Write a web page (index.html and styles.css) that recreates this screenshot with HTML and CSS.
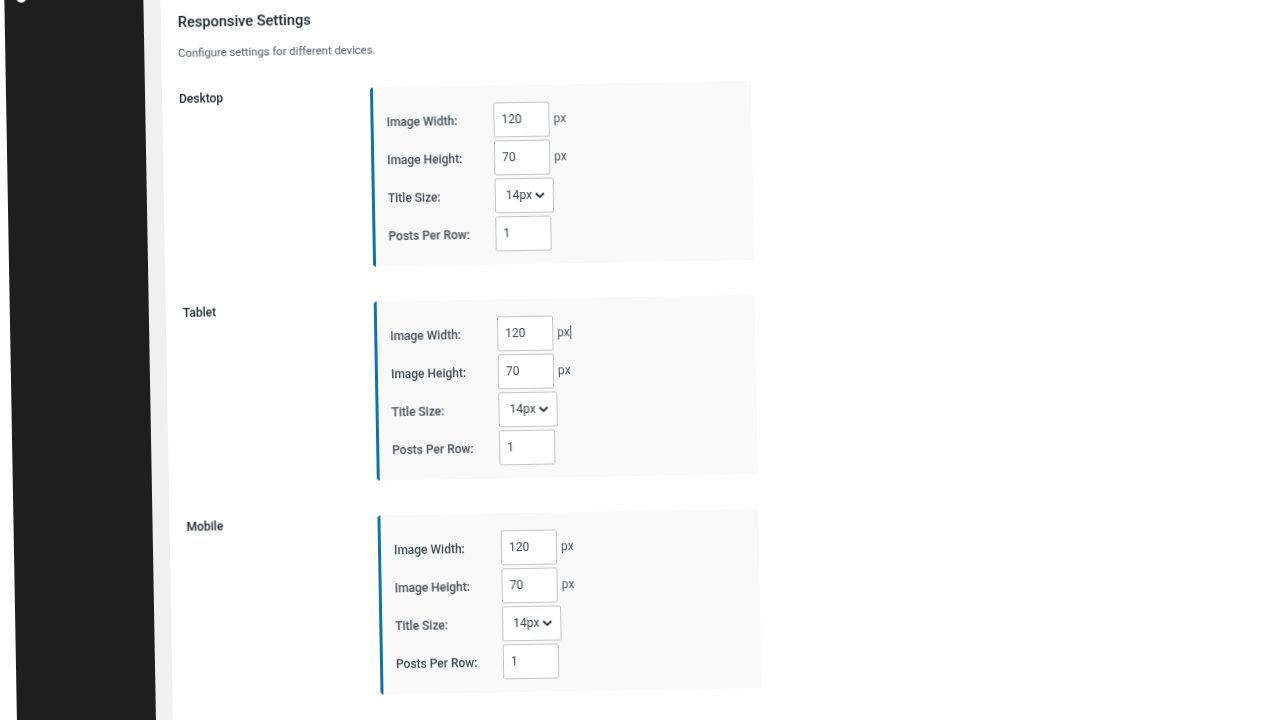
FILE: index.html
```html
<!DOCTYPE html>
<html lang="en">

<head>
    <meta charset="utf-8">
    <meta name="viewport" content="width=device-width, initial-scale=1.0">
    <title>Responsive Settings</title>

    <link rel="stylesheet" href="styles.css">
</head>

<body>
    <div class="page">
        <aside class="sidebar">
            <span class="menu-dot"></span>
        </aside>

        <div class="content">
            <main class="settings">
                <h2 class="heading">Responsive Settings</h2>
                <p class="intro">Configure settings for different devices.</p>

                <section class="device">
                    <h3 class="device-name">Desktop</h3>
                    <div class="panel">
                        <label class="row">
                            <span class="row-label">Image Width:</span>
                            <input class="field" type="text" value="120">
                            <span class="unit">px</span>
                        </label>
                        <label class="row">
                            <span class="row-label">Image Height:</span>
                            <input class="field" type="text" value="70">
                            <span class="unit">px</span>
                        </label>
                        <label class="row">
                            <span class="row-label">Title Size:</span>
                            <span class="select-wrap">
                                <select class="select"><option>14px</option></select>
                                <svg class="chevron" viewBox="0 0 10 7"><path d="M1 1.5 5 5.3 9 1.5"/></svg>
                            </span>
                        </label>
                        <label class="row">
                            <span class="row-label">Posts Per Row:</span>
                            <input class="field" type="text" value="1">
                        </label>
                    </div>
                </section>

                <section class="device">
                    <h3 class="device-name">Tablet</h3>
                    <div class="panel">
                        <label class="row">
                            <span class="row-label">Image Width:</span>
                            <input class="field" type="text" value="120">
                            <span class="unit unit-caret">px</span>
                        </label>
                        <label class="row">
                            <span class="row-label">Image Height:</span>
                            <input class="field" type="text" value="70">
                            <span class="unit">px</span>
                        </label>
                        <label class="row">
                            <span class="row-label">Title Size:</span>
                            <span class="select-wrap">
                                <select class="select"><option>14px</option></select>
                                <svg class="chevron" viewBox="0 0 10 7"><path d="M1 1.5 5 5.3 9 1.5"/></svg>
                            </span>
                        </label>
                        <label class="row">
                            <span class="row-label">Posts Per Row:</span>
                            <input class="field" type="text" value="1">
                        </label>
                    </div>
                </section>

                <section class="device">
                    <h3 class="device-name">Mobile</h3>
                    <div class="panel">
                        <label class="row">
                            <span class="row-label">Image Width:</span>
                            <input class="field" type="text" value="120">
                            <span class="unit">px</span>
                        </label>
                        <label class="row">
                            <span class="row-label">Image Height:</span>
                            <input class="field" type="text" value="70">
                            <span class="unit">px</span>
                        </label>
                        <label class="row">
                            <span class="row-label">Title Size:</span>
                            <span class="select-wrap">
                                <select class="select"><option>14px</option></select>
                                <svg class="chevron" viewBox="0 0 10 7"><path d="M1 1.5 5 5.3 9 1.5"/></svg>
                            </span>
                        </label>
                        <label class="row">
                            <span class="row-label">Posts Per Row:</span>
                            <input class="field" type="text" value="1">
                        </label>
                    </div>
                </section>
            </main>
        </div>
    </div>
</body>

</html>
```

FILE: styles.css
```css
html,
body {
    margin: 0;
    height: 100%;
    overflow: hidden;
    background: #fff;
}

/* the whole screen is tilted by about one degree */
.page {
    display: flex;
    width: 1400px;
    height: 800px;
    margin: -20px 0 0 4px;
    transform: rotate(-1deg);
    transform-origin: 0 0;
    font-family: Roboto, sans-serif;
    filter: blur(0.5px);
}

.sidebar {
    flex: 0 0 139px;
    padding: 13px 0 0 12px;
    box-sizing: border-box;
    background: #1e1e1e;
}

.menu-dot {
    display: block;
    width: 10px;
    height: 10px;
    border-radius: 50%;
    background: #fff;
}

.content {
    flex: 1;
    padding-left: 17px;
    background: #f0f0f1;
}

.settings {
    height: 100%;
    padding: 35px 0 0 17px;
    box-sizing: border-box;
    background: #fff;
}

.heading {
    margin: 0;
    font-size: 14.6px;
    line-height: 20px;
    font-weight: 500;
    color: #1d2327;
}

.intro {
    margin: 11.5px 0 0;
    font-size: 11.25px;
    line-height: 20px;
    color: #50575e;
}

.device {
    display: grid;
    grid-template-columns: 191px 380.5px;
    margin-bottom: 36.5px;
}

.intro + .device {
    margin-top: 29px;
}

.device-name {
    margin: 0;
    font-size: 12px;
    line-height: 13px;
    font-weight: 500;
    color: #1d2327;
}

.panel {
    height: 179px;
    margin-top: -1.5px;
    padding: 16.5px 0 0 13px;
    box-sizing: border-box;
    border-left: 3.5px solid #0f74a0;
    border-radius: 3px;
    background: #f9f9f9;
}

.row {
    display: flex;
    align-items: center;
    height: 35px;
    margin-bottom: 3px;
}

.row-label {
    flex: 0 0 107px;
    padding-top: 2px;
    font-size: 12px;
    font-weight: 500;
    color: #454b52;
}

.field,
.select {
    height: 35px;
    box-sizing: border-box;
    border: 1px solid #c3c4c7;
    border-radius: 2px;
    background: #fff;
    font-family: Roboto, sans-serif;
    font-size: 12px;
    color: #3c434a;
    outline: none;
}

.field {
    width: 56px;
    padding: 0 7px;
}

.unit {
    margin-left: 4px;
    font-size: 12px;
    color: #50575e;
}

.unit-caret {
    border-right: 1px solid #50575e;
}

.select-wrap {
    position: relative;
    display: block;
    height: 35px;
}

.select {
    display: block;
    width: 59px;
    padding: 0 0 0 10px;
    appearance: none;
}

.chevron {
    position: absolute;
    top: 14.5px;
    right: 9px;
    width: 10px;
    height: 7px;
    fill: none;
    stroke: #1d2327;
    stroke-width: 1.8;
}
```
